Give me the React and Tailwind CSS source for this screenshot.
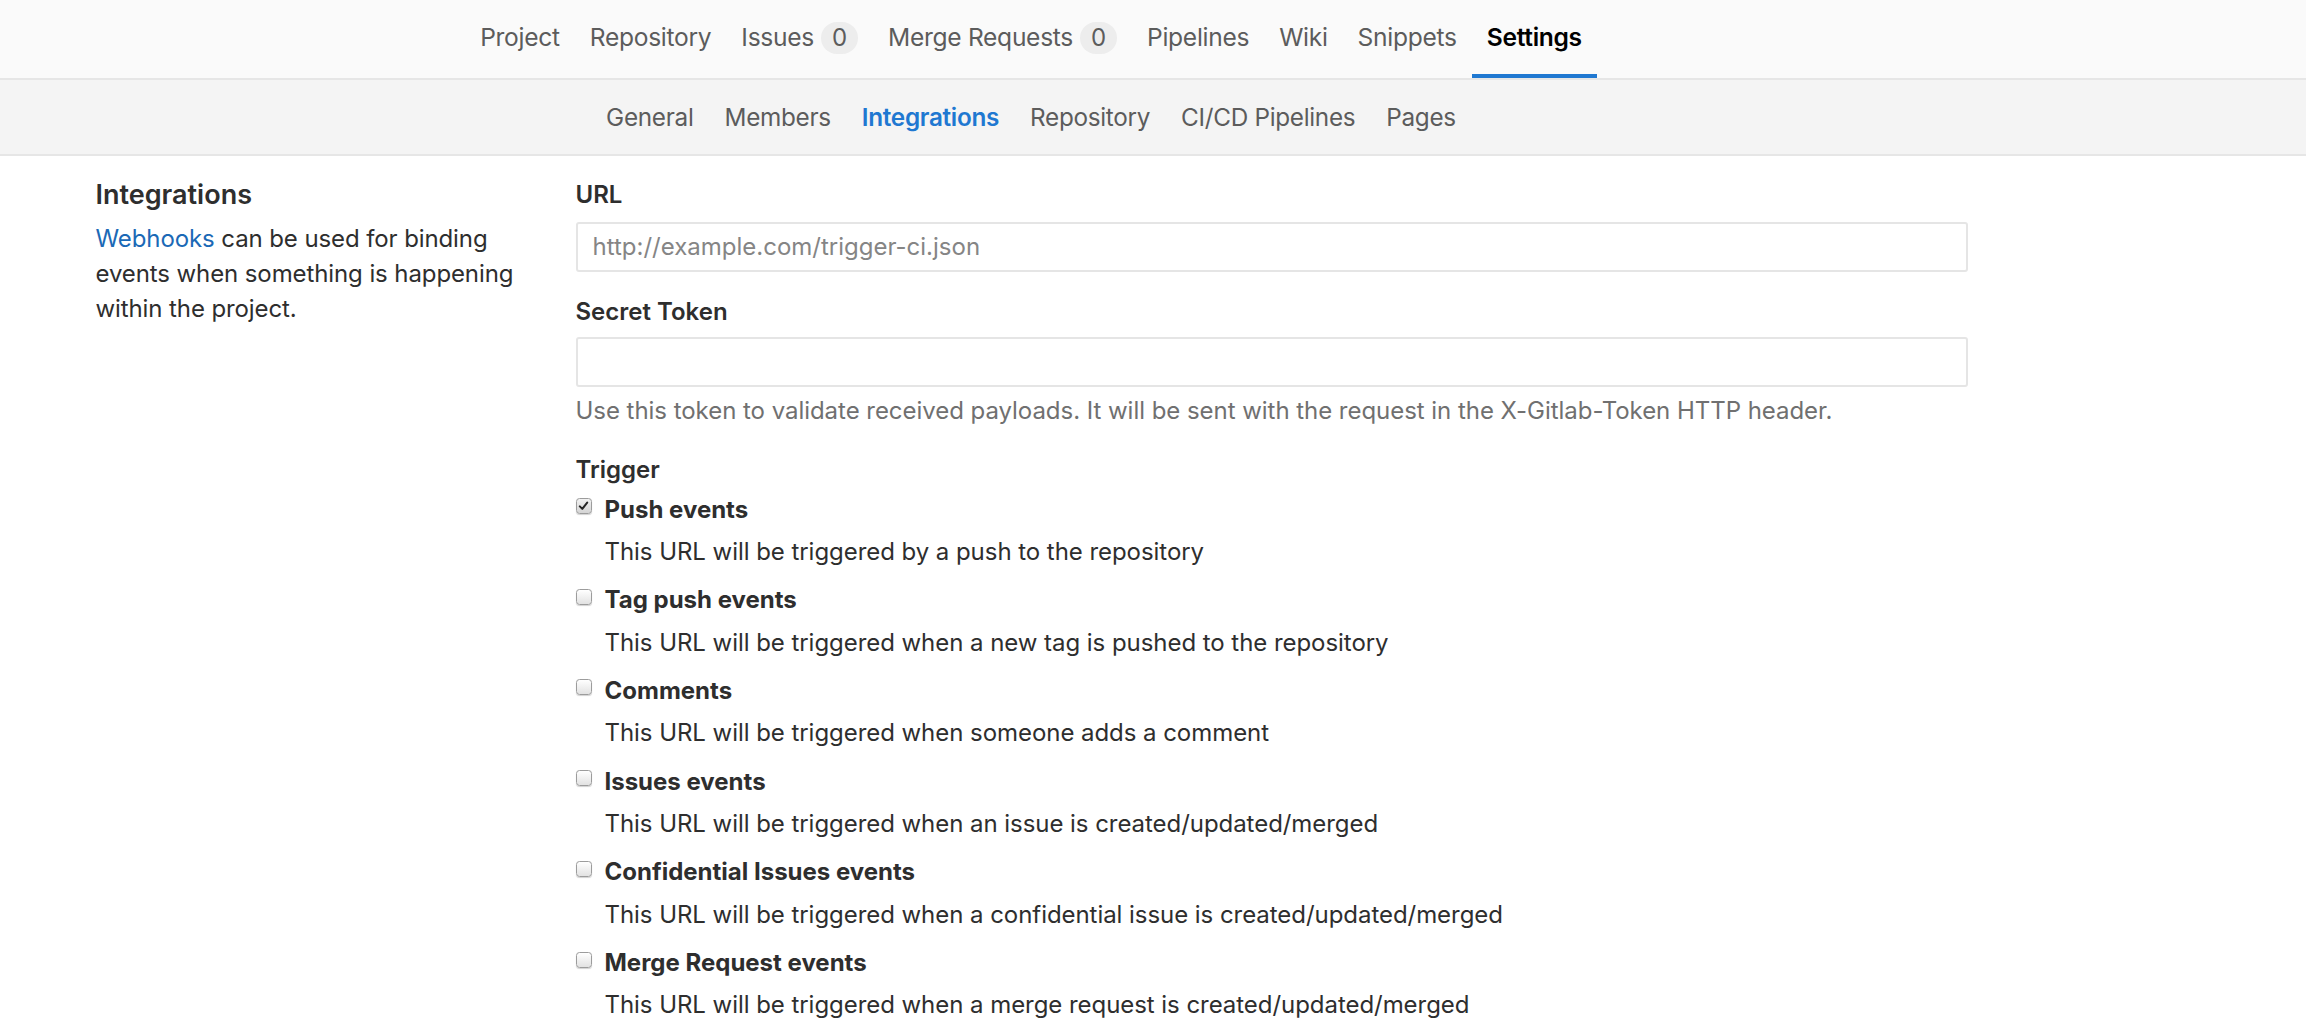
import React from "react";

const topItems = [
  { label: "Project" },
  { label: "Repository" },
  { label: "Issues", badge: "0" },
  { label: "Merge Requests", badge: "0" },
  { label: "Pipelines" },
  { label: "Wiki" },
  { label: "Snippets" },
  { label: "Settings", active: true },
];

const subItems = [
  { label: "General" },
  { label: "Members" },
  { label: "Integrations", active: true },
  { label: "Repository" },
  { label: "CI/CD Pipelines" },
  { label: "Pages" },
];

const triggers = [
  { title: "Push events", desc: "This URL will be triggered by a push to the repository", checked: true },
  { title: "Tag push events", desc: "This URL will be triggered when a new tag is pushed to the repository" },
  { title: "Comments", desc: "This URL will be triggered when someone adds a comment" },
  { title: "Issues events", desc: "This URL will be triggered when an issue is created/updated/merged" },
  { title: "Confidential Issues events", desc: "This URL will be triggered when a confidential issue is created/updated/merged" },
  { title: "Merge Request events", desc: "This URL will be triggered when a merge request is created/updated/merged" },
];

function Checkbox({ checked }) {
  return (
    <span
      className={
        "mt-[6.5px] flex h-[16px] w-[16px] shrink-0 items-center justify-center rounded-[3.5px] border border-[#9c9c9c] shadow-[0_1px_1px_rgba(0,0,0,0.18)] " +
        (checked
          ? "bg-gradient-to-b from-[#f2f2f2] to-[#d4d4d4]"
          : "bg-gradient-to-b from-[#ffffff] to-[#e2e2e2]")
      }
    >
      {checked && (
        <svg width="11" height="10" viewBox="0 0 11 10" className="block">
          <path d="M1.8 5.4 L4.3 7.9 L9.2 1.6" fill="none" stroke="#262626" strokeWidth="2" strokeLinecap="round" strokeLinejoin="round" />
        </svg>
      )}
    </span>
  );
}

export default function App() {
  return (
    <div className="min-h-screen bg-white font-['Inter','Liberation_Sans',sans-serif] text-[#2e2e2e] antialiased">
      {/* Top nav */}
      <nav className="flex h-[80px] justify-center border-b-2 border-[#e6e6e6] bg-[#fafafa] pr-[244px]">
        {topItems.map((it) => (
          <a
            key={it.label}
            className={
              "flex h-full items-center px-[15px] pb-[3px] text-[24.6px] tracking-[-0.3px] " +
              (it.active
                ? "font-semibold text-black shadow-[inset_0_-4px_0_#1f78d1]"
                : "text-[#5c5c5c]")
            }
          >
            <span>{it.label}</span>
            {it.badge && (
              <span className="ml-[7px] flex h-[32px] w-[37px] items-center justify-center rounded-full bg-[#ededed] text-[24px] text-[#5c5c5c]">
                {it.badge}
              </span>
            )}
          </a>
        ))}
      </nav>

      {/* Sub nav */}
      <nav className="flex h-[76px] justify-center border-b-2 border-[#e6e6e6] bg-[#f4f4f4] pr-[244px]">
        {subItems.map((it) => (
          <a
            key={it.label}
            className={
              "flex h-full items-center px-[15.5px] text-[24.3px] tracking-[-0.3px] " +
              (it.active ? "font-semibold text-[#1f78d1]" : "text-[#5c5c5c]")
            }
          >
            {it.label}
          </a>
        ))}
      </nav>

      {/* Content */}
      <main className="flex pl-[70px]">
        <aside className="w-[480px] shrink-0 px-[25.5px] pt-[23.7px]">
          <h4 className="text-[27px] font-semibold leading-[30px] text-[#2e2e2e]">Integrations</h4>
          <p className="mt-[11px] text-[24px] leading-[35px] tracking-[-0.1px]">
            <a className="text-[#1b69b6]">Webhooks</a> can be used for binding
            <br />
            events when something is happening
            <br />
            within the project.
          </p>
        </aside>

        <section className="w-[1443px] shrink-0 px-[25.5px] pt-[21px]">
          <label className="block text-[24px] font-semibold leading-[35.7px]">URL</label>
          <div className="mt-[9.6px] flex h-[50px] items-center rounded-[3px] border-2 border-[#e5e5e5] bg-white pl-[15px] text-[24px] text-[#858585]">
            http://example.com/trigger-ci.json
          </div>

          <label className="mt-[21.7px] block text-[24px] font-semibold leading-[35.7px]">Secret Token</label>
          <div className="mt-[7px] h-[50px] rounded-[3px] border-2 border-[#e5e5e5] bg-white" />
          <p className="mt-[6px] text-[24px] leading-[35.7px] tracking-[-0.04px] text-[#707070]">
            Use this token to validate received payloads. It will be sent with the request in the X-Gitlab-Token HTTP header.
          </p>

          <div className="mt-[24px] text-[24px] font-semibold leading-[35.7px]">Trigger</div>

          <div className="mt-[3.5px] flex flex-col">
            {triggers.map((t) => (
              <div key={t.title} className="mb-[12.6px] flex">
                <Checkbox checked={t.checked} />
                <div className="ml-[13px]">
                  <div className="text-[24px] font-bold leading-[35.7px] text-[#2e2e2e]">{t.title}</div>
                  <div className="mt-[6.7px] text-[24px] leading-[35.7px] tracking-[-0.05px] text-[#2e2e2e]">{t.desc}</div>
                </div>
              </div>
            ))}
          </div>
        </section>
      </main>
    </div>
  );
}
